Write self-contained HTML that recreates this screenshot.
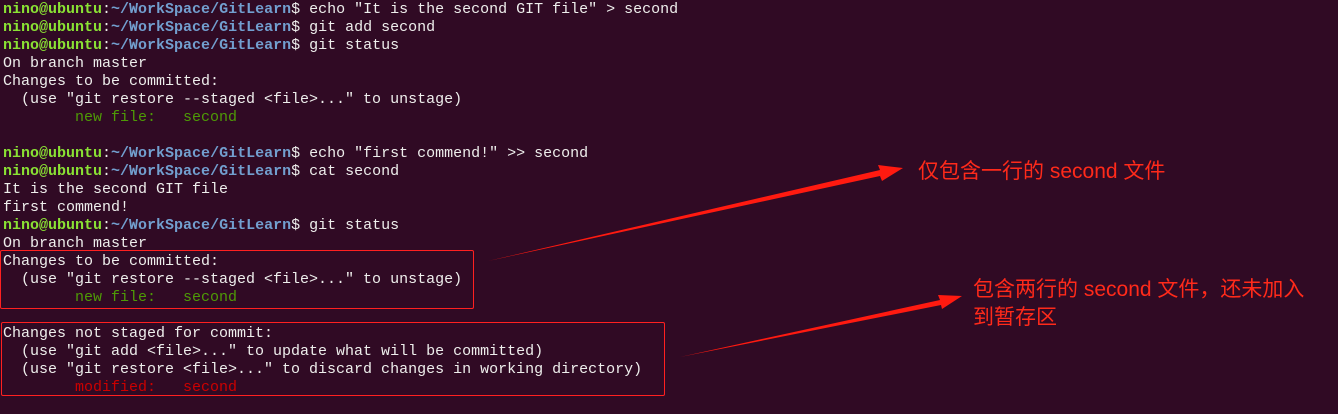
<!DOCTYPE html>
<html><head><meta charset="utf-8"><style>
body{margin:0;width:1338px;height:414px;background:#300a24;overflow:hidden;position:relative}
pre{margin:0;position:absolute;left:3px;top:1px;font-family:"Liberation Mono",monospace;font-size:15px;line-height:18px;color:#eeeeec}
.g{color:#8ae234;font-weight:bold}.b{color:#729fcf;font-weight:bold}.ng{color:#4e9a06}.r{color:#cc0000}
.box{position:absolute;border:1px solid #ff2020;border-radius:2px}
.t{position:absolute;color:#ff2a1a;font-family:"Liberation Sans","Noto Sans CJK SC",sans-serif;font-size:21px;line-height:28px}
</style></head><body>
<pre><span class="g">nino@ubuntu</span>:<span class="b">~/WorkSpace/GitLearn</span>$ echo "It is the second GIT file" &gt; second
<span class="g">nino@ubuntu</span>:<span class="b">~/WorkSpace/GitLearn</span>$ git add second
<span class="g">nino@ubuntu</span>:<span class="b">~/WorkSpace/GitLearn</span>$ git status
On branch master
Changes to be committed:
  (use "git restore --staged &lt;file&gt;..." to unstage)
<span class="ng">        new file:   second</span>

<span class="g">nino@ubuntu</span>:<span class="b">~/WorkSpace/GitLearn</span>$ echo "first commend!" &gt;&gt; second
<span class="g">nino@ubuntu</span>:<span class="b">~/WorkSpace/GitLearn</span>$ cat second
It is the second GIT file
first commend!
<span class="g">nino@ubuntu</span>:<span class="b">~/WorkSpace/GitLearn</span>$ git status
On branch master
Changes to be committed:
  (use "git restore --staged &lt;file&gt;..." to unstage)
<span class="ng">        new file:   second</span>

Changes not staged for commit:
  (use "git add &lt;file&gt;..." to update what will be committed)
  (use "git restore &lt;file&gt;..." to discard changes in working directory)
<span class="r">        modified:   second</span>
</pre>
<div class="box" style="left:0;top:250px;width:472px;height:57px"></div>
<div class="box" style="left:1px;top:322px;width:662px;height:72px"></div>
<svg width="1338" height="414" style="position:absolute;left:0;top:0">
<polygon points="488,261 880,170 878,165 903,168 882,181 880,176" fill="#ff1a10"/>
<polygon points="680,357 940,300 938,295 962,296 942,309 941,305" fill="#ff1a10"/>
</svg>
<div class="t" style="left:918px;top:158px">仅包含一行的 second 文件</div>
<div class="t" style="left:973px;top:276px">包含两行的 second 文件，还未加入<br>到暂存区</div>
</body></html>
